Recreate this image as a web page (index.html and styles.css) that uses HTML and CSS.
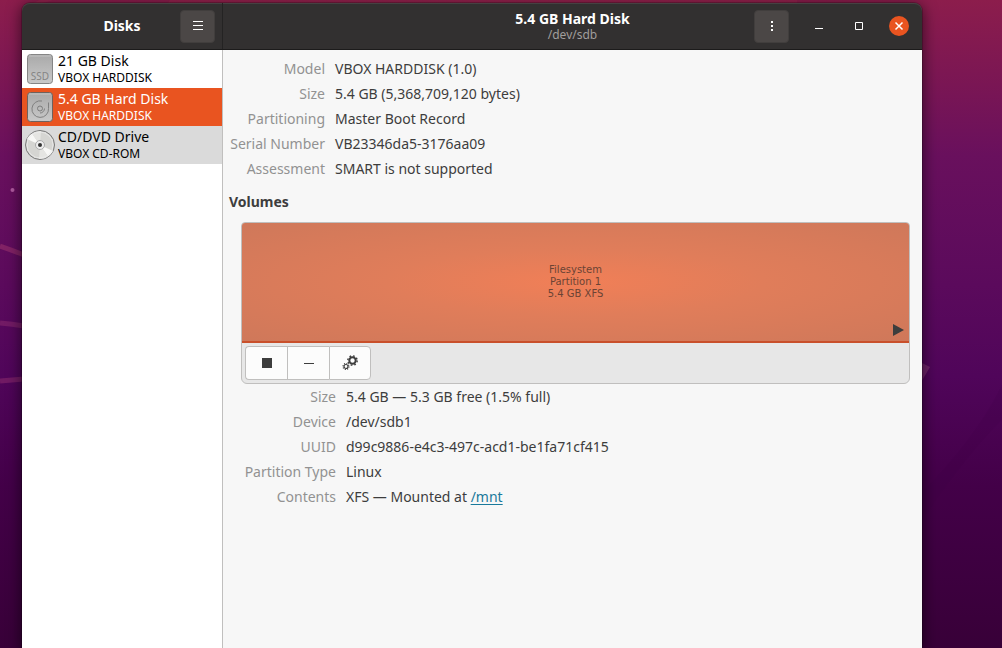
FILE: index.html
```html
<!DOCTYPE html>
<html lang="en">
<head>
<meta charset="utf-8">
<title>Disks</title>
<link rel="stylesheet" href="styles.css">
</head>
<body>
<svg class="wallpaper" viewBox="0 0 1002 648" preserveAspectRatio="none" aria-hidden="true">
  <path d="M40 0 53 0 43 3 33 3ZM170 0H797V3H168Z" fill="#a02b50" opacity=".4"/>
  <circle cx="12.500" cy="190" r="2" fill="#b05aa0"/>
  <path d="M0 246Q12 250 24 255" stroke="#8c2a68" stroke-width="5" fill="none" opacity=".75"/>
  <path d="M0 323Q12 324 24 326" stroke="#7c2268" stroke-width="5" fill="none" opacity=".75"/>
  <path d="M0 381Q12 380 24 379" stroke="#7c2268" stroke-width="5" fill="none" opacity=".75"/>
  <path d="M920 362 930 367 920 384Z" fill="#7a3070" opacity=".7"/>
  <path d="M1002 385Q975 440 920 494L922 520Q970 450 1002 420Z" fill="#3a0040" opacity=".12"/>
</svg>
<div class="window">
  <header class="titlebar">
    <div class="titlebar-side">
      <h1 class="title">Disks</h1>
      <button class="tool-button" type="button" aria-label="Application menu">
        <svg width="12" height="12" viewBox="0 0 12 12"><path d="M1 1.500H11M1 5.500H11M1 9.500H11" stroke="#fff"/></svg>
      </button>
    </div>
    <div class="titlebar-main">
      <div class="heading">
        <h2 class="title">5.4 GB Hard Disk</h2>
        <p class="subtitle">/dev/sdb</p>
      </div>
      <div class="controls">
        <button class="tool-button" type="button" aria-label="Drive options">
          <svg width="12" height="12" viewBox="0 0 12 12"><path d="M5 1h2v2H5zM5 5h2v2H5zM5 9h2v2H5z" fill="#fff"/></svg>
        </button>
        <button class="window-button" type="button" aria-label="Minimize">
          <svg width="12" height="12" viewBox="0 0 12 12"><path d="M2 8.500H10" stroke="#fff"/></svg>
        </button>
        <button class="window-button" type="button" aria-label="Maximize">
          <svg width="12" height="12" viewBox="0 0 12 12"><path d="M2.500 2.500H9.500V9.500H2.500Z" stroke="#fff" fill="none"/></svg>
        </button>
        <button class="window-button close" type="button" aria-label="Close">
          <svg width="12" height="12" viewBox="0 0 12 12"><path d="M2.500 2.500 9.500 9.500M9.500 2.500 2.500 9.500" stroke="#fff" stroke-width="1.500"/></svg>
        </button>
      </div>
    </div>
  </header>
  <div class="content">
    <nav class="sidebar" aria-label="Drives">
      <button class="drive" type="button">
        <svg class="drive-icon" viewBox="0 0 32 32" aria-hidden="true">
          <defs><linearGradient id="metal" x2="0" y2="1"><stop stop-color="#a9a9a9"/><stop offset="1" stop-color="#c9c9c9"/></linearGradient></defs>
          <rect x="3.500" y="1.500" width="25" height="29" rx="3" fill="url(#metal)" stroke="#858585"/>
          <path d="M5 3H27" stroke="#c4c4c4"/>
          <text class="icon-text" x="16" y="27" text-anchor="middle">SSD</text>
        </svg>
        <span class="drive-text"><span class="drive-name">21 GB Disk</span><span class="drive-model">VBOX HARDDISK</span></span>
      </button>
      <button class="drive selected" type="button">
        <svg class="drive-icon" viewBox="0 0 32 32" aria-hidden="true">
          <rect x="3.500" y="1.500" width="25" height="29" rx="3" fill="url(#metal)" stroke="#6e625e"/>
          <path d="M5 3H27" stroke="#c4c4c4"/>
          <circle cx="16" cy="17.500" r="2.500" fill="none" stroke="#7c7c7c"/>
          <path d="M18 10A8.300 8.300 0 1 0 24.500 17.500V11.500M20.500 17.500A4.500 4.500 0 0 1 16 22" fill="none" stroke="#808080"/>
        </svg>
        <span class="drive-text"><span class="drive-name">5.4 GB Hard Disk</span><span class="drive-model">VBOX HARDDISK</span></span>
      </button>
      <button class="drive optical" type="button">
        <svg class="drive-icon" viewBox="0 0 32 32" aria-hidden="true">
          <circle cx="16" cy="16" r="14.500" fill="#d5d5d2" stroke="#777"/>
          <path d="M16 16 3 10A14 14 0 0 1 8 4.500ZM16 16 29 22A14 14 0 0 1 24 27.500Z" fill="#f8f8f6"/>
          <path d="M16 16 8 4.500A14 14 0 0 1 17 2ZM16 16 24 27.500A14 14 0 0 1 15 30Z" fill="#e5e5e2"/>
          <circle cx="16" cy="16" r="13" fill="none" stroke="#eee" opacity=".7"/>
          <circle cx="16" cy="16" r="4.500" fill="#eee" stroke="#aaa"/>
          <circle cx="16" cy="16" r="2" fill="#333"/>
        </svg>
        <span class="drive-text"><span class="drive-name">CD/DVD Drive</span><span class="drive-model">VBOX CD-ROM</span></span>
      </button>
    </nav>
    <main class="details">
      <dl class="facts">
        <dt>Model</dt><dd>VBOX HARDDISK (1.0)</dd>
        <dt>Size</dt><dd>5.4 GB (5,368,709,120 bytes)</dd>
        <dt>Partitioning</dt><dd>Master Boot Record</dd>
        <dt>Serial Number</dt><dd>VB23346da5-3176aa09</dd>
        <dt>Assessment</dt><dd>SMART is not supported</dd>
      </dl>
      <h3 class="section-title">Volumes</h3>
      <section class="volumes">
        <div class="volume-box">
          <button class="partition" type="button">
            <span class="partition-text">Filesystem<br>Partition 1<br>5.4 GB XFS</span>
            <svg class="mounted" width="11" height="12" viewBox="0 0 11 12" aria-hidden="true"><path d="M0 0 11 6 0 12Z" fill="#3d3d3d"/></svg>
          </button>
          <div class="toolbar">
            <button class="action" type="button" aria-label="Unmount selected partition">
              <svg width="16" height="16" viewBox="0 0 16 16"><path d="M3 3h10v10H3z" fill="#3d3d3d"/></svg>
            </button>
            <button class="action" type="button" aria-label="Delete selected partition">
              <svg width="16" height="16" viewBox="0 0 16 16"><path d="M3 8.500H13" stroke="#3d3d3d"/></svg>
            </button>
            <button class="action" type="button" aria-label="Additional partition options">
              <svg width="16" height="16" viewBox="0 0 16 16" fill="none" stroke="#3d3d3d">
                <circle cx="10.500" cy="5.500" r="3.200" stroke-width="2"/>
                <circle cx="10.500" cy="5.500" r="4.700" stroke-width="1.400" stroke-dasharray="1.700 1.991"/>
                <circle cx="4" cy="11.500" r="2" stroke-width="1.200"/>
                <circle cx="4" cy="11.500" r="3" stroke-width="1.100" stroke-dasharray="1.100 1.256"/>
              </svg>
            </button>
          </div>
        </div>
        <dl class="facts">
          <dt>Size</dt><dd>5.4 GB — 5.3 GB free (1.5% full)</dd>
          <dt>Device</dt><dd>/dev/sdb1</dd>
          <dt>UUID</dt><dd>d99c9886-e4c3-497c-acd1-be1fa71cf415</dd>
          <dt>Partition Type</dt><dd>Linux</dd>
          <dt>Contents</dt><dd>XFS — Mounted at <a class="link" href="#mnt">/mnt</a></dd>
        </dl>
      </section>
    </main>
  </div>
</div>
</body>
</html>
```
FILE: styles.css
```css
* {
  box-sizing: border-box;
}

body {
  margin: 0;
  min-height: 100vh;
  display: flex;
  padding: 3px 80px 0 22px;
  overflow: hidden;
  background: linear-gradient(180deg, #8c1d4c 0%, #7a1654 13%, #69105d 24%, #5b0a5c 44%, #50055a 58%, #430048 75%, #380038 100%);
  color: #3d3d3d;
  font: 14px/20px "Noto Sans", "Open Sans", sans-serif;
}

h1, h2, h3, p, dl, dd {
  margin: 0;
}

button {
  margin: 0;
  padding: 0;
  border: 0;
  background: none;
  color: inherit;
  font: inherit;
}

svg {
  display: block;
}

.wallpaper {
  position: absolute;
  inset: 0;
  width: 100%;
  height: 100%;
}

.window {
  position: relative;
  flex: 1;
  display: flex;
  flex-direction: column;
  border-radius: 8px 8px 0 0;
  box-shadow: 0 3px 14px 2px rgba(0, 0, 0, 0.5), 0 0 0 1px rgba(0, 0, 0, 0.2);
}

.titlebar {
  display: flex;
  height: 47px;
  border-radius: 8px 8px 0 0;
  border-bottom: 1px solid #1c1b1b;
  background: #323030;
  box-shadow: inset 0 1px #454242;
  color: #fff;
}

.titlebar-side,
.titlebar-main {
  display: grid;
  align-items: center;
}

.titlebar-side {
  width: 201px;
  border-right: 1px solid #242323;
}

.titlebar-main {
  flex: 1;
}

.titlebar-side > *,
.titlebar-main > * {
  grid-area: 1 / 1;
}

.title {
  font-size: 14px;
  line-height: 18px;
  font-weight: 700;
  text-align: center;
}

.subtitle {
  color: #a09e9c;
  font-size: 12px;
  line-height: 14px;
  text-align: center;
}

.tool-button {
  display: grid;
  place-items: center;
  width: 35px;
  height: 33px;
  border: 1px solid #413e3d;
  border-radius: 4px;
  background: #4b4746;
}

.titlebar-side .tool-button {
  justify-self: end;
  margin-right: 7px;
}

.controls {
  display: flex;
  justify-self: end;
  align-items: center;
  gap: 20px;
  padding-right: 13px;
}

.window-button {
  display: grid;
  place-items: center;
  width: 20px;
  height: 20px;
  border-radius: 50%;
}

.close {
  background: #e95420;
}

.content {
  flex: 1;
  display: flex;
}

.sidebar {
  width: 201px;
  border-right: 1px solid #c0bfbe;
  background: #fff;
  color: #000;
}

.drive {
  display: flex;
  align-items: center;
  gap: 2px;
  width: 100%;
  height: 38px;
  padding: 0 2px;
  text-align: left;
}

.selected {
  background: #e95420;
  color: #fff;
}

.optical {
  background: #dadada;
}

.drive-icon {
  width: 32px;
  height: 32px;
}

.icon-text {
  fill: #858585;
  font: 10px "Noto Sans", sans-serif;
}

.drive-text {
  display: grid;
}

.drive-name {
  line-height: 18px;
}

.drive-model {
  font-size: 12px;
  line-height: 16px;
}

.details {
  flex: 1;
  padding: 6px 12px 0 6px;
  background: #f7f7f7;
}

.facts {
  display: grid;
  grid-template-columns: 96px 1fr;
  column-gap: 10px;
  line-height: 25px;
}

.facts dt {
  color: #929292;
  text-align: right;
  white-space: nowrap;
}

.section-title {
  padding: 11px 0 10px;
  font-size: 14px;
  line-height: 20px;
}

.volumes {
  padding-left: 12px;
}

.volumes .facts {
  grid-template-columns: 95px 1fr;
}

.volume-box {
  border: 1px solid #c0bfbe;
  border-radius: 4px 4px 6px 6px;
  background: #e7e7e7;
  overflow: hidden;
}

.partition {
  position: relative;
  display: grid;
  place-items: center;
  width: 100%;
  height: 120px;
  border-bottom: 2px solid #c9502b;
  background: radial-gradient(ellipse farthest-corner, #f17f57 0%, #e07d5a 40%, #cf785a 100%);
}

.partition-text {
  color: #6b4334;
  font: 10px/12px "DejaVu Sans", sans-serif;
}

.mounted {
  position: absolute;
  right: 5px;
  bottom: 5px;
}

.toolbar {
  display: flex;
  padding: 3px;
}

.action {
  display: grid;
  place-items: center;
  width: 42px;
  height: 34px;
  border: 1px solid #c0bfbe;
  border-right-width: 0;
  background: #fcfcfc;
}

.action:first-child {
  border-radius: 4px 0 0 4px;
}

.action:last-child {
  border-right-width: 1px;
  border-radius: 0 4px 4px 0;
}

.link {
  color: #19799b;
  text-underline-offset: 2px;
}
```
